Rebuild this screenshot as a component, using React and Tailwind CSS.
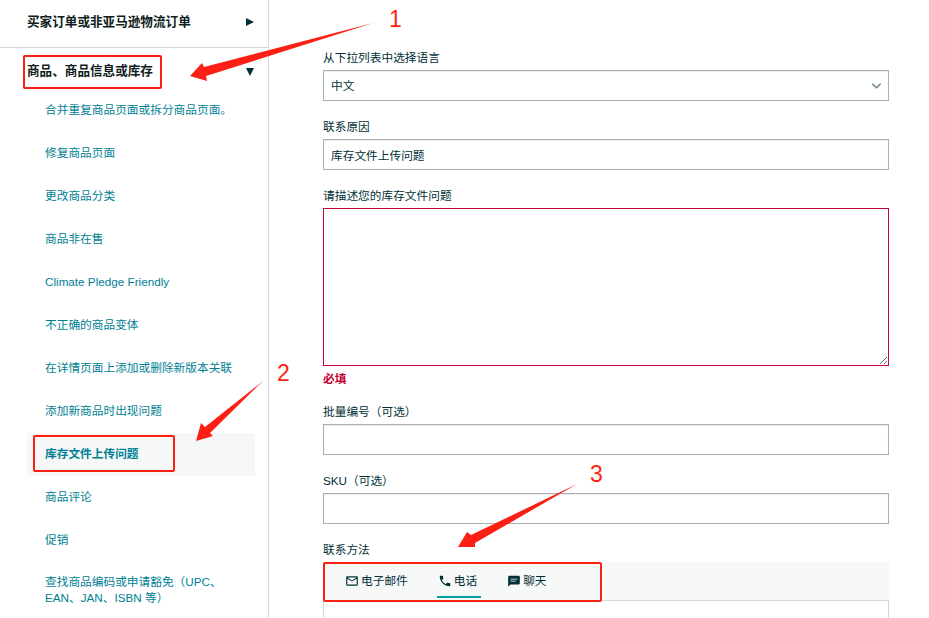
import React from "react";

const font = { fontFamily: '"Liberation Sans", "Noto Sans CJK SC", sans-serif' };

const navItems = [
  "合并重复商品页面或拆分商品页面。",
  "修复商品页面",
  "更改商品分类",
  "商品非在售",
  "Climate Pledge Friendly",
  "不正确的商品变体",
  "在详情页面上添加或删除新版本关联",
  "添加新商品时出现问题",
  "库存文件上传问题",
  "商品评论",
  "促销",
];

const MailIcon = () => (
  <svg viewBox="0 0 24 24" className="h-[14px] w-[14px] fill-[#002f36]">
    <path d="M20 4H4c-1.1 0-1.99.9-1.99 2L2 18c0 1.1.9 2 2 2h16c1.1 0 2-.9 2-2V6c0-1.1-.9-2-2-2zm0 14H4V8l8 5 8-5v10zm-8-7L4 6h16l-8 5z" />
  </svg>
);

const PhoneIcon = () => (
  <svg viewBox="0 0 24 24" className="h-[14px] w-[14px] fill-[#002f36]">
    <path d="M6.62 10.79c1.44 2.83 3.76 5.14 6.59 6.59l2.2-2.2c.27-.27.67-.36 1.02-.24 1.12.37 2.33.57 3.57.57.55 0 1 .45 1 1V20c0 .55-.45 1-1 1-9.39 0-17-7.61-17-17 0-.55.45-1 1-1h3.5c.55 0 1 .45 1 1 0 1.25.2 2.45.57 3.57.11.35.03.74-.25 1.02l-2.2 2.2z" />
  </svg>
);

const ChatIcon = () => (
  <svg viewBox="0 0 24 24" className="h-[14px] w-[14px] fill-[#002f36]">
    <path d="M20 3H4c-1.1 0-2 .9-2 2v17l4-4h14c1.1 0 2-.9 2-2V5c0-1.1-.9-2-2-2zM6 8h12v1.500H6V8zm0 3.500h9V13H6v-1.500z" fillRule="evenodd" />
  </svg>
);

const Chevron = () => (
  <svg viewBox="0 0 12 8" className="h-[8px] w-[11px]">
    <path d="M1.5 1.5 6 6l4.500-4.500" fill="none" stroke="#6c7f86" strokeWidth="1.6" />
  </svg>
);

// red arrows painted on top of the screenshot
const Arrows = () => (
  <svg className="pointer-events-none absolute inset-0 h-[618px] w-[929px]" viewBox="0 0 929 618">
    <polygon fill="#fc1f14" points="373,23 204,67 202,63 190,76 207,81 206,76" />
    <polygon fill="#fc1f14" points="263,381 205,427 201,423 196,441 213,436 210,433" />
    <polygon fill="#fc1f14" points="577,484 471,535 467,532 458,547 475,547 475,543" />
  </svg>
);

function Field({ label, children, className = "" }) {
  return (
    <div className={className}>
      <div className="mb-[4px] h-[17px] text-[11.7px] leading-[17px] text-[#002f36]">{label}</div>
      {children}
    </div>
  );
}

const inputCls =
  "block h-[31px] w-full border border-[#a6b2b2] bg-white px-[7px] text-[11.7px] text-[#002f36] shadow-[inset_0_1px_1px_rgba(0,0,0,0.08)] outline-none";

export default function App() {
  return (
    <div style={font} className="relative flex h-[618px] w-[929px] overflow-hidden bg-white">
      <aside className="h-full w-[269px] shrink-0 border-r border-[#d5d9d9]">
        <div className="flex h-[48px] items-center justify-between border-b border-[#d5d9d9] pb-[3px] pl-[27px] pr-[14px]">
          <span className="text-[12.6px] font-bold text-[#0f1c20]">买家订单或非亚马逊物流订单</span>
          <span className="h-0 w-0 border-y-[4.5px] border-l-[8px] border-y-transparent border-l-[#002f36]" />
        </div>
        <div className="flex h-[41px] items-center justify-between pt-[6px] pl-[27px] pr-[14px]">
          <span className="text-[12.6px] font-bold text-[#0f1c20]">商品、商品信息或库存</span>
          <span className="h-0 w-0 border-x-[4.5px] border-t-[8px] border-x-transparent border-t-[#002f36]" />
        </div>
        <ul className="ml-[27px] w-[228px]">
          {navItems.map((item) => {
            const active = item === "库存文件上传问题";
            return (
              <li
                key={item}
                className={`flex h-[43px] items-center pb-[2px] pl-[18px] text-[11.7px] text-[#007f94] ${
                  active ? "bg-[#f6f8f8] font-bold" : ""
                }`}
              >
                {item}
              </li>
            );
          })}
          <li className="pl-[18px] pt-[12px] text-[11.7px] leading-[16px] text-[#007f94]">
            查找商品编码或申请豁免（UPC、EAN、JAN、ISBN 等）
          </li>
        </ul>
      </aside>

      <main className="ml-[54px] w-[566px] shrink-0 pt-[49px]">
        <Field label="从下拉列表中选择语言">
          <div className={`${inputCls} flex items-center justify-between pr-[6px]`}>
            <span>中文</span>
            <Chevron />
          </div>
        </Field>
        <Field label="联系原因" className="mt-[17px]">
          <input className={inputCls} readOnly value="库存文件上传问题" />
        </Field>
        <Field label="请描述您的库存文件问题" className="mt-[17px]">
          <textarea className="block h-[158px] w-full border border-[#c40233] bg-white outline-none" />
        </Field>
        <div className="mt-[4px] h-[17px] text-[11.7px] font-bold leading-[17px] text-[#c40233]">必填</div>
        <Field label="批量编号（可选）" className="mt-[16px]">
          <input className={inputCls} readOnly value="" />
        </Field>
        <Field label="SKU（可选）" className="mt-[17px]">
          <input className={inputCls} readOnly value="" />
        </Field>
        <Field label="联系方法" className="mt-[17px]">
          <div className="flex h-[38px] items-stretch bg-[#f7f8f8] pb-[2px] pl-[22px] text-[11.7px] text-[#002f36]">
            <div className="mr-[29px] flex items-center gap-[2px] border-b-2 border-transparent pt-[3px]">
              <MailIcon />
              <span>电子邮件</span>
            </div>
            <div className="mr-[26px] flex items-center gap-[2px] border-b-2 border-[#00a0a8] pl-[1px] pr-[4px] pt-[3px]">
              <PhoneIcon />
              <span>电话</span>
            </div>
            <div className="flex items-center gap-[2px] border-b-2 border-transparent pt-[3px]">
              <ChatIcon />
              <span>聊天</span>
            </div>
          </div>
          <div className="h-[40px] border border-[#d5d9d9] bg-white" />
        </Field>
      </main>

      <Arrows />
      <div className="pointer-events-none absolute left-[23px] top-[55px] h-[34px] w-[139px] rounded-[2px] border-[2.5px] border-[#fc1f14]" />
      <div className="pointer-events-none absolute left-[33px] top-[435px] h-[37px] w-[142px] rounded-[2px] border-[2.5px] border-[#fc1f14]" />
      <div className="pointer-events-none absolute left-[323px] top-[562px] h-[40px] w-[279px] rounded-[2px] border-[2.5px] border-[#fc1f14]" />
      <span className="absolute left-[389px] top-[6px] text-[23px] leading-[26px] text-[#fc1f14]">1</span>
      <span className="absolute left-[277px] top-[360px] text-[23px] leading-[26px] text-[#fc1f14]">2</span>
      <span className="absolute left-[590px] top-[461px] text-[23px] leading-[26px] text-[#fc1f14]">3</span>
    </div>
  );
}
